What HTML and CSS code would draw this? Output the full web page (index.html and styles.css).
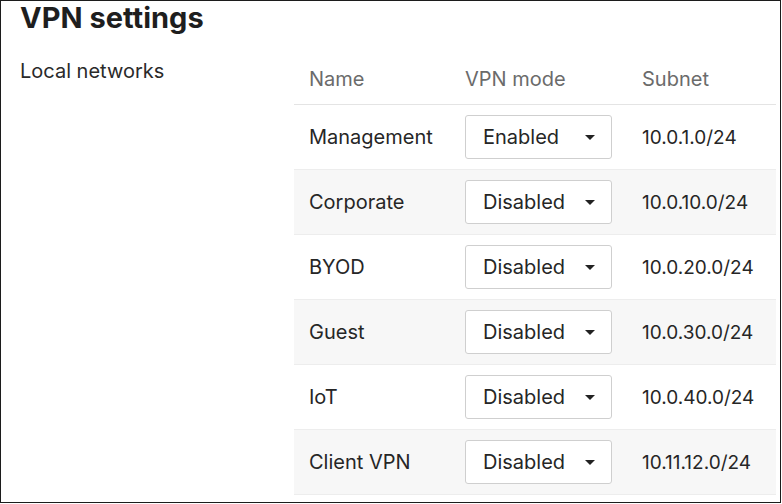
FILE: index.html
```html
<!DOCTYPE html>
<html>
<head>
<meta charset="utf-8">
<link rel="stylesheet" href="styles.css">
</head>
<body>
<div class="frame">
  <h1 class="title">VPN settings</h1>
  <div class="section">
    <div class="label">Local networks</div>
    <div class="table">
      <div class="row head">
        <div class="c name">Name</div>
        <div class="c mode">VPN mode</div>
        <div class="c subnet">Subnet</div>
      </div>
      <div class="row">
        <div class="c name">Management</div>
        <div class="c mode"><div class="select"><span>Enabled</span><span class="caret"></span></div></div>
        <div class="c subnet">10.0.1.0/24</div>
      </div>
      <div class="row alt">
        <div class="c name">Corporate</div>
        <div class="c mode"><div class="select"><span>Disabled</span><span class="caret"></span></div></div>
        <div class="c subnet">10.0.10.0/24</div>
      </div>
      <div class="row">
        <div class="c name">BYOD</div>
        <div class="c mode"><div class="select"><span>Disabled</span><span class="caret"></span></div></div>
        <div class="c subnet">10.0.20.0/24</div>
      </div>
      <div class="row alt">
        <div class="c name">Guest</div>
        <div class="c mode"><div class="select"><span>Disabled</span><span class="caret"></span></div></div>
        <div class="c subnet">10.0.30.0/24</div>
      </div>
      <div class="row">
        <div class="c name">IoT</div>
        <div class="c mode"><div class="select"><span>Disabled</span><span class="caret"></span></div></div>
        <div class="c subnet">10.0.40.0/24</div>
      </div>
      <div class="row alt">
        <div class="c name">Client VPN</div>
        <div class="c mode"><div class="select"><span>Disabled</span><span class="caret"></span></div></div>
        <div class="c subnet">10.11.12.0/24</div>
      </div>
    </div>
  </div>
</div>
</body>
</html>
```

FILE: styles.css
```css
html, body {
  margin: 0;
  padding: 0;
  background: #fff;
}
body {
  font-family: Inter, "Noto Sans", "Liberation Sans", sans-serif;
  color: #222;
}
.frame {
  box-sizing: border-box;
  width: 781px;
  height: 503px;
  border: 1px solid #1c1c1c;
  box-shadow: 0 1px 0 #9a9a9a;
  padding: 0 0 0 19px;
  overflow: hidden;
}
.title {
  margin: 0;
  font-size: 29px;
  line-height: 32px;
  font-weight: 700;
  color: #1e1e1e;
  padding-top: 1px;
}
.section {
  display: flex;
  margin-top: 25px;
}
.label {
  width: 274px;
  font-size: 20px;
  line-height: 24px;
  color: #2a2a2a;
}
.table {
  width: 482px;
}
.row {
  display: grid;
  grid-template-columns: 156px 177px 1fr;
  align-items: center;
  height: 65px;
  border-bottom: 1px solid #ededed;
  box-sizing: border-box;
  font-size: 20px;
  color: #262626;
}
.row.head {
  height: 46px;
  align-items: start;
  padding-top: 8px;
  color: #6b6b6b;
  border-bottom: 1px solid #e4e4e4;
}
.row.alt {
  background: #f7f7f7;
}
.c {
  padding-left: 15px;
  white-space: nowrap;
}
.row:not(.head) .subnet {
  font-size: 19px;
}
.select {
  box-sizing: border-box;
  width: 147px;
  height: 44px;
  border: 1px solid #cfcfcf;
  border-radius: 3px;
  background: #fff;
  display: flex;
  align-items: center;
  justify-content: space-between;
  padding: 0 16px 0 17px;
}
.caret {
  width: 0;
  height: 0;
  border-left: 5px solid transparent;
  border-right: 5px solid transparent;
  border-top: 5px solid #222;
}
```
